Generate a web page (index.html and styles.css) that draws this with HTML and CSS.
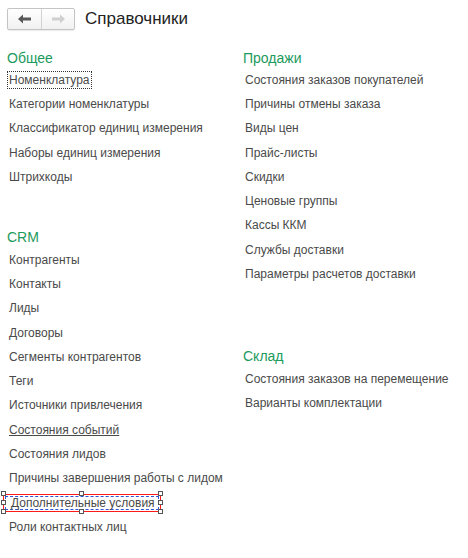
FILE: index.html
```html
<!DOCTYPE html>
<html lang="ru">
<head>
    <meta charset="UTF-8" />
    <title>Справочники</title>
    <link rel="stylesheet" href="styles.css">
</head>
<body>

    <div class="header">
        <div class="nav-buttons">
            <button class="nav-btn" title="Назад">
                <svg width="14" height="10" viewBox="0 0 14 10"><path d="M0 5 L5 0.5 V3.5 H13 V6.5 H5 V9.5 Z" fill="#585858" /></svg>
            </button>
            <button class="nav-btn disabled" title="Вперед">
                <svg width="14" height="10" viewBox="0 0 14 10"><path d="M14 5 L9 0.5 V3.5 H1 V6.5 H9 V9.5 Z" fill="#cfcfcf" /></svg>
            </button>
        </div>
        <h1 class="title">Справочники</h1>
    </div>

    <div class="columns">
        <div class="col col-left">
            <div class="group">
                <h2>Общее</h2>
                <a href="#" class="item"><span class="focused">Номенклатура</span></a>
                <a href="#" class="item">Категории номенклатуры</a>
                <a href="#" class="item">Классификатор единиц измерения</a>
                <a href="#" class="item">Наборы единиц измерения</a>
                <a href="#" class="item">Штрихкоды</a>
            </div>

            <div class="group group-crm">
                <h2>CRM</h2>
                <a href="#" class="item">Контрагенты</a>
                <a href="#" class="item">Контакты</a>
                <a href="#" class="item">Лиды</a>
                <a href="#" class="item">Договоры</a>
                <a href="#" class="item">Сегменты контрагентов</a>
                <a href="#" class="item">Теги</a>
                <a href="#" class="item">Источники привлечения</a>
                <a href="#" class="item hover">Состояния событий</a>
                <a href="#" class="item">Состояния лидов</a>
                <a href="#" class="item">Причины завершения работы с лидом</a>
                <a href="#" class="item selected">
                    <span class="sel-box"><span class="sel-dash">Дополнительные условия</span></span>
                    <i class="handle h-tl"></i><i class="handle h-tc"></i><i class="handle h-tr"></i>
                    <i class="handle h-ml"></i><i class="handle h-mr"></i>
                    <i class="handle h-bl"></i><i class="handle h-bc"></i><i class="handle h-br"></i>
                </a>
                <a href="#" class="item">Роли контактных лиц</a>
            </div>
        </div>

        <div class="col col-right">
            <div class="group">
                <h2>Продажи</h2>
                <a href="#" class="item">Состояния заказов покупателей</a>
                <a href="#" class="item">Причины отмены заказа</a>
                <a href="#" class="item">Виды цен</a>
                <a href="#" class="item">Прайс-листы</a>
                <a href="#" class="item">Скидки</a>
                <a href="#" class="item">Ценовые группы</a>
                <a href="#" class="item">Кассы ККМ</a>
                <a href="#" class="item">Службы доставки</a>
                <a href="#" class="item">Параметры расчетов доставки</a>
            </div>

            <div class="group group-stock">
                <h2>Склад</h2>
                <a href="#" class="item">Состояния заказов на перемещение</a>
                <a href="#" class="item">Варианты комплектации</a>
            </div>
        </div>
    </div>

</body>
</html>
```

FILE: styles.css
```css
body {
    margin: 0;
    background-color: white;
    font-family: Arial, 'Liberation Sans', sans-serif;
    color: #4a4a4a;
}

.header {
    display: flex;
    align-items: center;
    padding: 8px 7px 0 7px;
    height: 22px;
}

.nav-buttons {
    display: flex;
    height: 22px;
    border: 1px solid #c4c4c4;
    border-radius: 2px;
    box-sizing: border-box;
    background: linear-gradient(#ffffff, #f1f1f1);
    box-shadow: 0 1px 1px rgba(0, 0, 0, 0.08);
}

    .nav-btn {
        width: 33px;
        height: 20px;
        border: none;
        background: transparent;
        padding: 0;
        display: flex;
        align-items: center;
        justify-content: center;
    }

        .nav-btn + .nav-btn {
            border-left: 1px solid #d2d2d2;
        }

.title {
    margin: 0 0 0 10px;
    font-size: 17px;
    font-weight: normal;
    color: #222;
    line-height: 22px;
}

.columns {
    display: flex;
    padding: 18.5px 0 0 7px;
}

.col-left {
    width: 236px;
}

.group {
    display: flex;
    flex-direction: column;
    align-items: flex-start;
}

    .group h2 {
        margin: 0;
        font-size: 14px;
        font-weight: normal;
        line-height: 19px;
        color: #1c9a5c;
    }

.group-crm {
    margin-top: 39.5px;
}

.group-stock {
    margin-top: 61.3px;
}

.item {
    position: relative;
    display: flex;
    align-items: center;
    height: 24.3px;
    padding-left: 2px;
    font-size: 12px;
    color: #4a4a4a;
    text-decoration: none;
}

    .item.hover {
        text-decoration: underline;
    }

.focused {
    margin-left: -2px;
    padding: 1px 1px;
    border: 1px dotted #333;
}

/* selection frame of the designer: red line, white gap, blue dashes */
.item.selected {
    margin-left: -4px;
    padding-left: 0;
}

.sel-box {
    display: block;
    border: 1px solid #ff1a1a;
    padding: 1px;
    background: white;
}

.sel-dash {
    display: block;
    border: 1px dashed #2f55d4;
    padding: 0 3px 0 5px;
    line-height: 12px;
}

.handle {
    position: absolute;
    width: 3px;
    height: 3px;
    border: 1px solid #555;
    background: white;
}

.h-tl, .h-tc, .h-tr { top: 1px; }
.h-ml, .h-mr { top: 10px; }
.h-bl, .h-bc, .h-br { bottom: 1px; }
.h-tl, .h-ml, .h-bl { left: -2px; }
.h-tc, .h-bc { left: 76px; }
.h-tr, .h-mr, .h-br { right: -2px; }
```
